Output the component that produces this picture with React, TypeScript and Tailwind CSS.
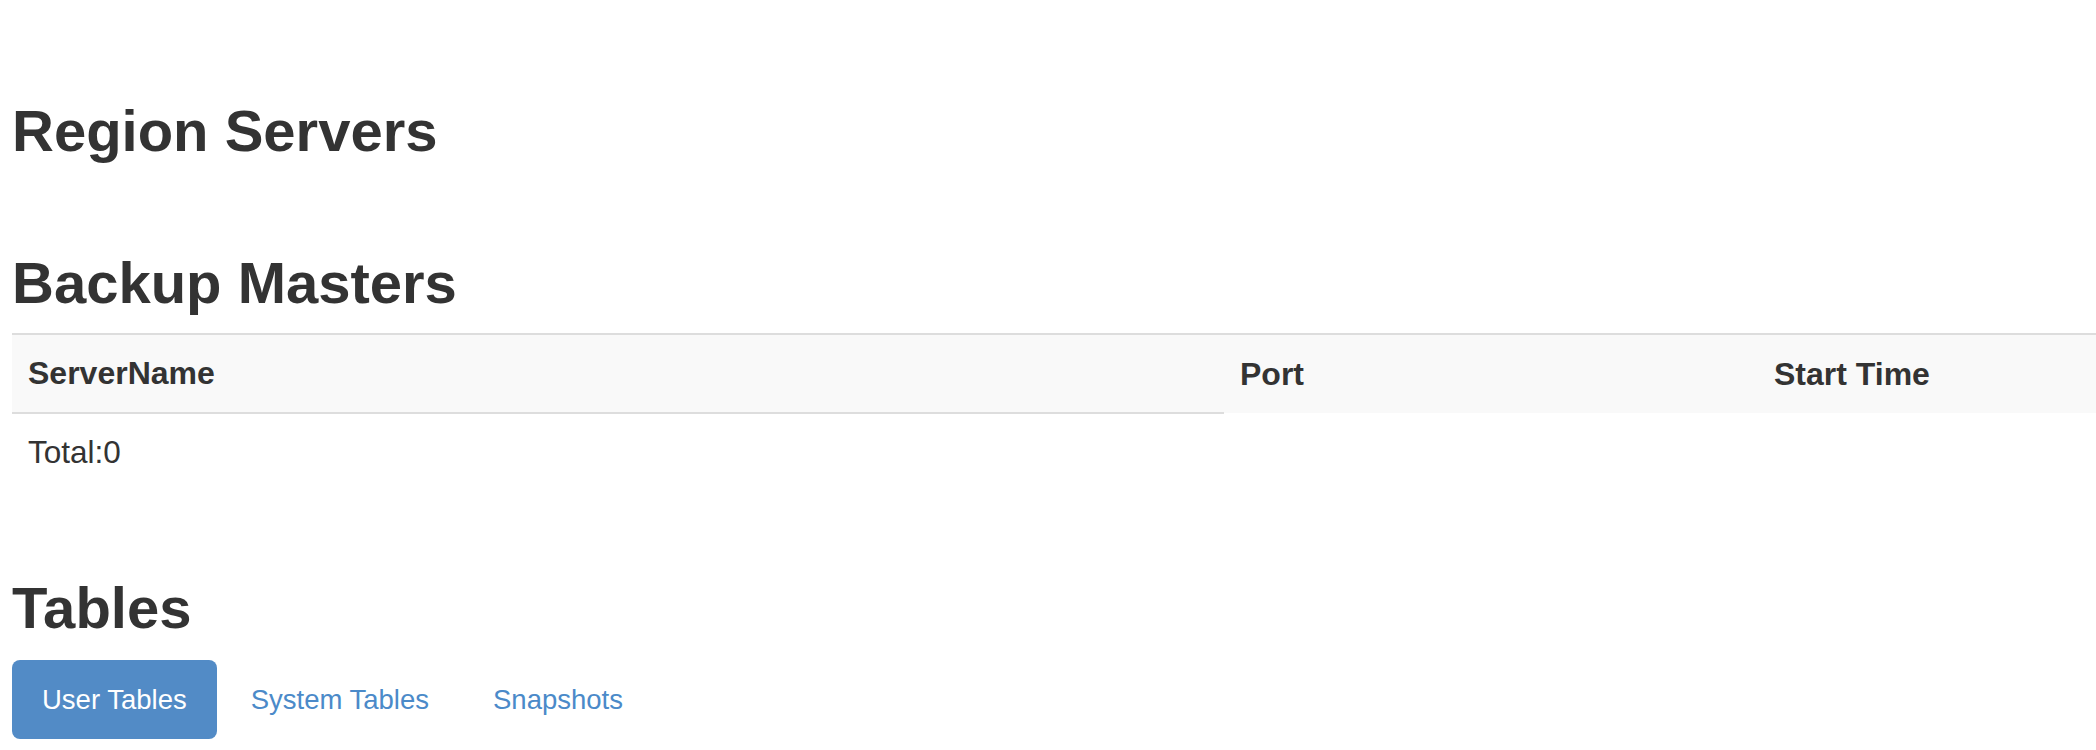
import React from "react";

export default function App() {
  const font = { fontFamily: '"Liberation Sans", Arial, Helvetica, sans-serif' };
  return (
    <div className="bg-white text-[#333333] min-h-[750px]" style={font}>
      <div className="flex flex-col pl-[12px] pt-[99px]">
        <h2 className="text-[58px] leading-[63px] font-bold">Region Servers</h2>

        <h2 className="mt-[89px] text-[58px] leading-[63px] font-bold">Backup Masters</h2>

        <table className="mt-[19px] w-[2084px] table-fixed border-collapse text-left">
          <colgroup>
            <col className="w-[1212px]" />
            <col className="w-[534px]" />
            <col />
          </colgroup>
          <tbody>
            <tr className="bg-[#f9f9f9]">
              <th className="border-t-2 border-[#dddddd] px-[16px] py-[16px] text-[32px] leading-[45px] font-bold">
                ServerName
              </th>
              <th className="border-t-2 border-[#dddddd] px-[16px] py-[16px] text-[32px] leading-[45px] font-bold">
                Port
              </th>
              <th className="border-t-2 border-[#dddddd] px-[16px] py-[16px] text-[32px] leading-[45px] font-bold">
                Start Time
              </th>
            </tr>
            <tr>
              <td className="border-t-2 border-[#dddddd] px-[16px] py-[16px] text-[31.5px] leading-[45px]">
                Total:0
              </td>
            </tr>
          </tbody>
        </table>

        <h2 className="mt-[85px] text-[58px] leading-[63px] font-bold">Tables</h2>

        <ul className="mt-[21px] flex gap-[4px] text-[27.5px]">
          <li>
            <a className="block rounded-[8px] bg-[#528bc6] px-[30px] py-[20px] leading-[39px] text-white">
              User Tables
            </a>
          </li>
          <li>
            <a className="block px-[30px] py-[20px] leading-[39px] text-[#4b8ac9]">System Tables</a>
          </li>
          <li>
            <a className="block px-[30px] py-[20px] leading-[39px] text-[#4b8ac9]">Snapshots</a>
          </li>
        </ul>
      </div>
    </div>
  );
}
